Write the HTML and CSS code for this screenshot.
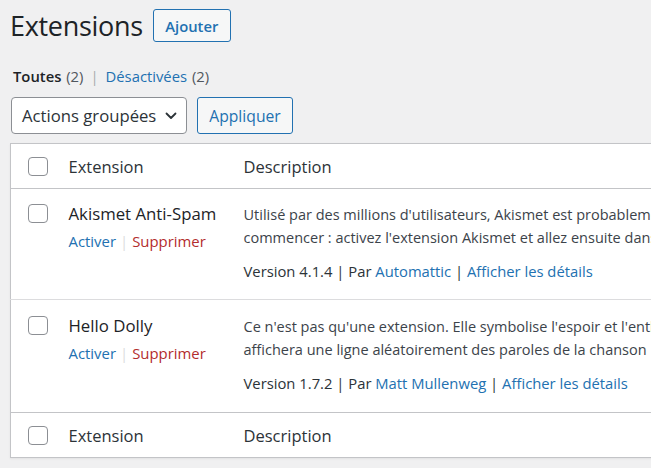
FILE: index.html
```html
<!DOCTYPE html>
<html lang="fr">
<head>
<meta charset="utf-8">
<title>Extensions</title>
<link rel="stylesheet" href="styles.css">
</head>
<body>
<div class="wrap">
  <div class="page-head">
    <h1 class="page-title">Extensions</h1>
    <a class="btn btn-add" href="#">Ajouter</a>
  </div>
  <ul class="subsubsub">
    <li><span class="current">Toutes</span> <span class="count">(2)</span></li>
    <li class="sep">|</li>
    <li><a href="#">Désactivées</a> <span class="count">(2)</span></li>
  </ul>
  <div class="tablenav">
    <div class="select">
      <span>Actions groupées</span>
      <svg class="chev" width="12" height="8" viewBox="0 0 12 8"><polyline points="1.5,1.5 6,6 10.5,1.5" fill="none" stroke="#2c3338" stroke-width="1.8" stroke-linecap="round" stroke-linejoin="round"/></svg>
    </div>
    <a class="btn btn-apply" href="#">Appliquer</a>
  </div>
  <table class="plugins">
    <colgroup><col class="c-check"><col class="c-name"><col class="c-desc"></colgroup>
    <thead>
      <tr><th class="check"><span class="cb"></span></th><th class="name">Extension</th><th class="desc">Description</th></tr>
    </thead>
    <tbody>
      <tr>
        <td class="check row-check"><span class="cb"></span></td>
        <td class="name">
          <div class="title">Akismet Anti-Spam</div>
          <div class="row-actions"><a href="#">Activer</a><span class="bar">|</span><a class="delete" href="#">Supprimer</a></div>
        </td>
        <td class="desc">
          <p class="text">Utilisé par des millions d'utilisateurs, Akismet est probablement le meilleur moyen au monde de protéger votre blog du spam. Il protège votre site même pendant que vous dormez. Pour<br>commencer : activez l'extension Akismet et allez ensuite dans la page de réglages pour configurer votre clé API.</p>
          <p class="meta">Version 4.1.4 | Par <a href="#">Automattic</a> | <a href="#">Afficher les détails</a></p>
        </td>
      </tr>
      <tr class="second">
        <td class="check row-check"><span class="cb"></span></td>
        <td class="name">
          <div class="title">Hello Dolly</div>
          <div class="row-actions"><a href="#">Activer</a><span class="bar">|</span><a class="delete" href="#">Supprimer</a></div>
        </td>
        <td class="desc">
          <p class="text">Ce n'est pas qu'une extension. Elle symbolise l'espoir et l'enthousiasme de toute une génération, résumés en deux mots, chantés notamment par Louis Armstrong : Hello, Dolly.<br>affichera une ligne aléatoirement des paroles de la chanson Hello, Dolly dans le coin supérieur droit de l'écran.</p>
          <p class="meta">Version 1.7.2 | Par <a href="#">Matt Mullenweg</a> | <a href="#">Afficher les détails</a></p>
        </td>
      </tr>
    </tbody>
    <tfoot>
      <tr><th class="check"><span class="cb"></span></th><th class="name">Extension</th><th class="desc">Description</th></tr>
    </tfoot>
  </table>
</div>
</body>
</html>
```
FILE: styles.css
```css
html, body {
  margin: 0;
  padding: 0;
  background: #f0f0f1;
  overflow: hidden;
}
body {
  font-family: "Open Sans", "Noto Sans", sans-serif;
  color: #1d2327;
  width: 651px;
  height: 468px;
}
a { text-decoration: none; color: #2271b1; }
.wrap { padding-left: 10px; }

.page-head {
  display: flex;
  align-items: center;
  gap: 10px;
  padding-top: 9px;
}
.page-title {
  margin: 0;
  font-size: 27px;
  font-weight: 400;
  line-height: 33px;
  color: #1d2327;
  letter-spacing: -0.3px;
}
.btn {
  display: inline-flex;
  align-items: center;
  justify-content: center;
  box-sizing: border-box;
  border: 1px solid #2271b1;
  border-radius: 3px;
  background: #f6f7f7;
  color: #2271b1;
}
.btn-add {
  width: 78px;
  height: 33px;
  font-size: 14.8px;
  font-weight: 600;
}
.subsubsub {
  list-style: none;
  margin: 24px 0 0 3px;
  padding: 0;
  display: flex;
  gap: 6px;
  font-size: 14.8px;
  line-height: 20px;
  color: #50575e;
}
.subsubsub .count { margin-left: 1px; }
.subsubsub .current { color: #1d2327; font-weight: 600; }
.subsubsub .sep { color: #a7aaad; padding: 0 1px; }

.tablenav {
  display: flex;
  gap: 10px;
  margin-top: 11px;
  margin-left: 1px;
}
.select {
  box-sizing: border-box;
  width: 176px;
  height: 37px;
  border: 1px solid #8c8f94;
  border-radius: 4px;
  background: #fff;
  display: flex;
  align-items: center;
  justify-content: space-between;
  padding: 0 9px 0 10px;
  font-size: 16.7px;
  color: #2c3338;
}
.btn-apply {
  width: 96px;
  height: 37px;
  font-size: 15.7px;
}

.plugins {
  margin-top: 9px;
  width: 1000px;
  border: 1px solid #c3c4c7;
  border-collapse: collapse;
  table-layout: fixed;
  background: #fff;
  box-shadow: 0 1px 2px rgba(0,0,0,0.06);
}
.c-check { width: 48px; }
.c-name { width: 175px; }
.plugins th {
  height: 44px;
  padding: 0 10px;
  text-align: left;
  font-weight: 400;
  font-size: 16.5px;
  color: #2c3338;
  vertical-align: middle;
}
.plugins thead tr { border-bottom: 1px solid #c3c4c7; }
.plugins tfoot tr { border-top: 1px solid #c3c4c7; }
.plugins th.check { padding: 0 0 0 17px; }
.plugins td {
  vertical-align: top;
  padding: 14px 10px 16px;
}
.plugins tr.second td { padding-top: 15px; padding-bottom: 17px; }
.plugins tr.second td.check { padding-top: 16px; }
.plugins tbody tr + tr { border-top: 1px solid #dcdcde; }
.plugins td.check { padding: 15px 0 0 17px; }
.cb {
  display: block;
  box-sizing: border-box;
  width: 20px;
  height: 19px;
  border: 1px solid #8c8f94;
  border-radius: 4px;
  background: #fff;
}
.title {
  font-size: 16.8px;
  line-height: 22px;
  color: #1d2327;
}
.row-actions {
  margin-top: 5px;
  font-size: 14.9px;
  line-height: 22px;
  white-space: nowrap;
}
.row-actions .bar { color: #dcdcde; margin: 0 4px; }
.row-actions .delete { color: #b32d2e; }
.desc p { margin: 0; white-space: nowrap; }
.desc .text {
  font-size: 14.5px;
  line-height: 23px;
  color: #3c434a;
}
.desc .meta {
  margin-top: 11px;
  font-size: 14.8px;
  line-height: 23px;
  color: #2c3338;
}
```
